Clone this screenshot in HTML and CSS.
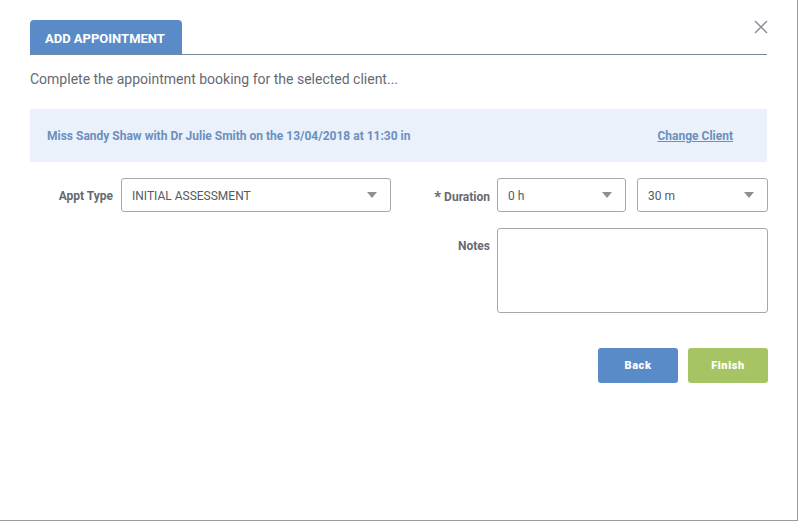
FILE: index.html
```html
<!DOCTYPE html>
<html>
<head>
<meta charset="utf-8">
<link rel="stylesheet" href="styles.css">
</head>
<body>
<div class="modal">
  <button class="close" aria-label="Close">
    <svg width="14" height="14" viewBox="0 0 14 14"><path d="M1 1L13 13M13 1L1 13" stroke="#8a8f98" stroke-width="1.5" fill="none"/></svg>
  </button>
  <div class="tabs">
    <div class="tab">ADD APPOINTMENT</div>
  </div>
  <p class="subtitle">Complete the appointment booking for the selected client...</p>
  <div class="info">
    <span class="info-text">Miss Sandy Shaw with Dr Julie Smith on the 13/04/2018 at 11:30 in</span>
    <a class="change" href="#">Change Client</a>
  </div>
  <div class="row">
    <label class="lbl lbl-type">Appt Type</label>
    <div class="select sel-type"><span>INITIAL ASSESSMENT</span><i class="caret"></i></div>
    <label class="lbl lbl-dur"><span class="star">*</span> Duration</label>
    <div class="select sel-h"><span>0 h</span><i class="caret"></i></div>
    <div class="select sel-m"><span>30 m</span><i class="caret"></i></div>
  </div>
  <div class="row row-notes">
    <label class="lbl lbl-notes">Notes</label>
    <div class="textarea"></div>
  </div>
  <div class="actions">
    <button class="btn btn-back">Back</button>
    <button class="btn btn-finish">Finish</button>
  </div>
</div>
</body>
</html>
```
FILE: styles.css
```css
html, body {
  margin: 0;
  padding: 0;
  background: #fff;
}
body {
  font-family: Roboto, "Liberation Sans", Arial, sans-serif;
}
.modal {
  position: relative;
  box-sizing: border-box;
  padding: 20px 0 0 30px;
  border-right: 1px solid #9a9a9a;
  border-bottom: 1px solid #9a9a9a;
  width: 798px;
  height: 521px;
}
.close {
  position: absolute;
  top: 19px;
  left: 753px;
  width: 16px;
  height: 16px;
  padding: 0;
  margin: 0;
  border: 0;
  background: none;
  display: flex;
  align-items: center;
  justify-content: center;
}
.tabs {
  width: 737px;
  display: flex;
  border-bottom: 1px solid #72889b;
}
.tab {
  width: 152px;
  height: 34px;
  box-sizing: border-box;
  background: #5a8bc9;
  color: #fff;
  font-size: 13px;
  font-weight: 700;
  display: flex;
  align-items: center;
  padding-left: 15px;
  padding-top: 2px;
  border-radius: 4px 4px 0 0;
}
.subtitle {
  margin: 14px 0 0;
  line-height: 20px;
  font-size: 14px;
  color: #666a70;
}
.info {
  margin-top: 20px;
  width: 737px;
  height: 53px;
  box-sizing: border-box;
  background: #eaf1fa;
  display: flex;
  align-items: center;
  justify-content: space-between;
  padding: 1px 34px 0 17px;
  font-size: 12px;
  font-weight: 700;
  color: #6b8fbf;
}
.change {
  color: #6b8fbf;
  text-decoration: underline;
}
.row {
  display: flex;
  align-items: center;
  margin-top: 16px;
}
.lbl {
  font-size: 12px;
  font-weight: 700;
  color: #666a70;
  text-align: right;
  box-sizing: border-box;
  padding-top: 2px;
}
.lbl-type {
  width: 83px;
  margin-right: 8px;
}
.lbl-dur {
  width: 99px;
  margin-right: 7px;
}
.star {
  font-size: 15px;
  position: relative;
  top: 1px;
}
.select {
  height: 34px;
  box-sizing: border-box;
  border: 1px solid #a8a8a8;
  border-radius: 3px;
  display: flex;
  align-items: center;
  justify-content: space-between;
  padding: 2px 13px 0 10px;
  font-size: 12px;
  color: #555a60;
}
.sel-type { width: 270px; }
.sel-h { width: 129px; margin-right: 11px; }
.sel-m { width: 131px; }
.caret {
  width: 0;
  height: 0;
  border-left: 5px solid transparent;
  border-right: 5px solid transparent;
  border-top: 6px solid #8c8f94;
  margin-top: -2px;
}
.row-notes {
  align-items: flex-start;
}
.lbl-notes {
  width: 460px;
  margin-right: 7px;
  padding-top: 11px;
}
.textarea {
  width: 271px;
  height: 85px;
  box-sizing: border-box;
  border: 1px solid #a8a8a8;
  border-radius: 3px;
}
.actions {
  width: 738px;
  display: flex;
  justify-content: flex-end;
  gap: 10px;
  margin-top: 35px;
}
.btn {
  width: 80px;
  height: 35px;
  border: 0;
  border-radius: 3px;
  color: #fff;
  font-family: Roboto, "Liberation Sans", Arial, sans-serif;
  font-size: 11px;
  font-weight: 900;
  letter-spacing: 0.6px;
  padding: 0;
}
.btn-back { background: #5a8bc9; }
.btn-finish { background: #a6c464; }
```
